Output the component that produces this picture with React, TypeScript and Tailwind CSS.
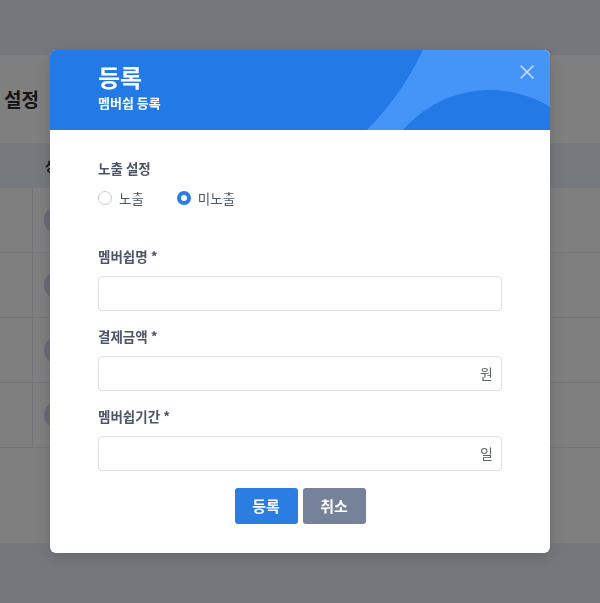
import React from "react";

function RadioItem({ checked, label }: { checked: boolean; label: string }) {
  return (
    <label className="flex items-center gap-[7px] cursor-pointer">
      {checked ? (
        <span className="box-border h-[14px] w-[14px] rounded-full border-[4px] border-[#2b7de1] bg-white" />
      ) : (
        <span className="box-border h-[14px] w-[14px] rounded-full border border-[#c8ccd4] bg-white" />
      )}
      <span className="text-[13.5px] leading-[20px] text-[#4a5568]">{label}</span>
    </label>
  );
}

function Field({ label, suffix, first }: { label: string; suffix?: string; first?: boolean }) {
  return (
    <div className={first ? "" : "mt-[15px]"}>
      <div className="h-[20px] text-[13.5px] font-semibold leading-[20px] text-[#4a5568]">{label}</div>
      <div className="mt-[10px] flex h-[35px] items-center rounded-[4px] border border-[#dcdfe6] bg-white pl-[10px] pr-[8px]">
        <input className="h-full min-w-0 flex-1 bg-transparent text-[13px] text-[#333] outline-none" />
        {suffix ? <span className="text-[14px] text-[#5f6368]">{suffix}</span> : null}
      </div>
    </div>
  );
}

function Row() {
  return (
    <div className="flex h-[65px] border-b border-[#e4e8ee]">
      <div className="w-[33px] border-r border-[#e4e8ee]" />
      <div className="flex items-center pl-[11px]">
        <div className="h-[28px] w-[28px] rounded-full bg-[#d3d6ec]" />
      </div>
    </div>
  );
}

export default function App() {
  return (
    <div className="relative h-[603px] w-[600px] overflow-hidden bg-[#e8eef6] font-['Noto_Sans_CJK_KR','Noto_Sans',sans-serif]">
      <div className="mt-[55px] h-[488px] bg-white">
        <div className="flex h-[88px] items-center pl-[4px] text-[19px] font-bold text-[#2a2a2a]">설정</div>
        <div className="flex h-[45px] items-center bg-[#eaf1f9] pl-[45px] text-[13px] font-bold text-[#333]">상태</div>
        <Row />
        <Row />
        <Row />
        <Row />
      </div>

      <div className="fixed inset-0 flex items-center justify-center bg-black/50">
        <div className="w-[500px] overflow-hidden rounded-[6px] bg-white shadow-[0_4px_16px_rgba(0,0,0,0.15)]">
          <div className="relative h-[80px] bg-[#4594f7]">
            <svg className="absolute inset-0" width="500" height="80" viewBox="0 0 500 80">
              <circle cx="109" cy="-125" r="292" fill="#2379e5" />
              <circle cx="440" cy="155" r="115" fill="#2379e5" />
            </svg>
            <div className="relative pl-[48px] pt-[11px] text-white">
              <div className="text-[24px] font-bold leading-[31px]">등록</div>
              <div className="mt-[2px] text-[13px] font-bold leading-[18px]">멤버쉽 등록</div>
            </div>
            <button className="absolute right-[16px] top-[15px] flex h-[14px] w-[14px] items-center justify-center">
              <svg width="14" height="14" viewBox="0 0 14 14" fill="none">
                <path d="M1 1L13 13M13 1L1 13" stroke="rgba(255,255,255,0.72)" strokeWidth="1.5" strokeLinecap="round" />
              </svg>
            </button>
          </div>

          <div className="px-[48px] pb-[29px] pt-[28px]">
            <div className="h-[20px] text-[13.5px] font-bold leading-[20px] text-[#4a5568]">노출 설정</div>
            <div className="mt-[10px] flex h-[20px] items-center gap-[33px]">
              <RadioItem checked={false} label="노출" />
              <RadioItem checked={true} label="미노출" />
            </div>

            <div className="mt-[38px]">
              <Field label="멤버쉽명 *" first />
              <Field label="결제금액 *" suffix="원" />
              <Field label="멤버쉽기간 *" suffix="일" />
            </div>

            <div className="mt-[17px] flex justify-center gap-[5px]">
              <button className="h-[36px] w-[63px] rounded-[3px] bg-[#2b7de1] text-[15px] font-bold text-white">등록</button>
              <button className="h-[36px] w-[63px] rounded-[3px] bg-[#76829a] text-[15px] font-bold text-white">취소</button>
            </div>
          </div>
        </div>
      </div>
    </div>
  );
}
